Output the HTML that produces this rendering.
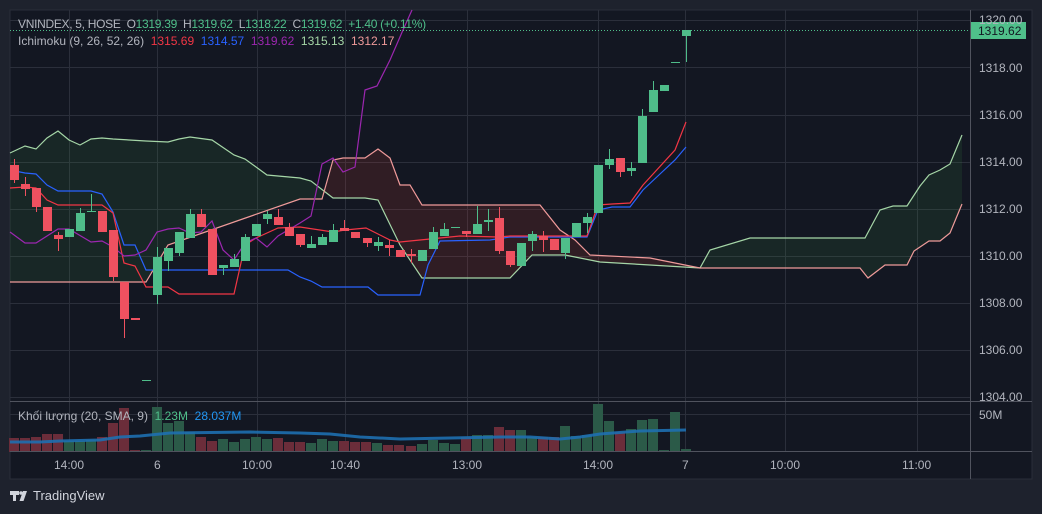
<!DOCTYPE html>
<html><head><meta charset="utf-8"><style>
html,body{margin:0;padding:0;background:#1e222d;width:1042px;height:514px;overflow:hidden;font-family:"Liberation Sans","DejaVu Sans",sans-serif}
#c{position:absolute;left:0;top:0}
.t{position:absolute;font-size:12px;white-space:nowrap}
</style></head><body>
<svg id="c" width="1042" height="514" xmlns="http://www.w3.org/2000/svg">
<rect x="10" y="10" width="1022" height="469" fill="#131722" stroke="#2a2e39"/>
<g stroke="#2b2f3b" stroke-width="1">
<line x1="10" y1="20.5" x2="971" y2="20.5"/><line x1="10" y1="67.5" x2="971" y2="67.5"/><line x1="10" y1="115.5" x2="971" y2="115.5"/><line x1="10" y1="162.5" x2="971" y2="162.5"/><line x1="10" y1="209.5" x2="971" y2="209.5"/><line x1="10" y1="256.5" x2="971" y2="256.5"/><line x1="10" y1="303.5" x2="971" y2="303.5"/><line x1="10" y1="350.5" x2="971" y2="350.5"/><line x1="10" y1="397.5" x2="971" y2="397.5"/><line x1="10" y1="414.5" x2="971" y2="414.5"/>
<line x1="69.5" y1="10" x2="69.5" y2="452"/><line x1="157.5" y1="10" x2="157.5" y2="452"/><line x1="257.5" y1="10" x2="257.5" y2="452"/><line x1="345.5" y1="10" x2="345.5" y2="452"/><line x1="467.5" y1="10" x2="467.5" y2="452"/><line x1="598.5" y1="10" x2="598.5" y2="452"/><line x1="685.5" y1="10" x2="685.5" y2="452"/><line x1="785.5" y1="10" x2="785.5" y2="452"/><line x1="917.5" y1="10" x2="917.5" y2="452"/>
</g>
<g id="cloud"></g>
<g id="vol"></g>
<g id="lines" fill="none" stroke-width="1.2"></g>
<g id="cand"></g>
<line x1="10" y1="30.5" x2="971" y2="30.5" stroke="#4fbf8a" stroke-dasharray="1 2"/>
<line x1="10" y1="401.5" x2="1032" y2="401.5" stroke="#50535e"/>
<line x1="10" y1="451.5" x2="1032" y2="451.5" stroke="#50535e"/>
<line x1="970.5" y1="10" x2="970.5" y2="479" stroke="#50535e"/>
<rect x="971" y="22" width="55" height="17" fill="#4fbf8a"/>
<g fill="#d1d4dc"><path d="M10 491h9v4h-3v6h-3v-6h-3z"/><path d="M23 491h4l-3.5 10h-4z"/><circle cx="21" cy="493" r="1.8"/></g>
</svg>
<div class="t" style="left:18px;top:17px;color:#b2b5be;letter-spacing:-0.3px">VNINDEX, 5, HOSE&nbsp; O<span style="color:#4fbf8a">1319.39</span>&nbsp; H<span style="color:#4fbf8a">1319.62</span>&nbsp; L<span style="color:#4fbf8a">1318.22</span>&nbsp; C<span style="color:#4fbf8a">1319.62</span>&nbsp; <span style="color:#4fbf8a">+1.40 (+0.11%)</span></div>
<div class="t" style="left:18px;top:34px;color:#b2b5be">Ichimoku (9, 26, 52, 26)&nbsp; <span style="color:#f23645">1315.69</span>&nbsp; <span style="color:#2962ff">1314.57</span>&nbsp; <span style="color:#9c27b0">1319.62</span>&nbsp; <span style="color:#a5d6a7">1315.13</span>&nbsp; <span style="color:#ef9a9a">1312.17</span></div>
<div class="t" style="left:18px;top:409px;color:#b2b5be">Khối lượng (20, SMA, 9)&nbsp; <span style="color:#4fbf8a">1.23M</span>&nbsp; <span style="color:#2196f3">28.037M</span></div>
<div class="t" style="left:979px;top:13px;color:#b2b5be">1320.00</div>
<div class="t" style="left:978px;top:24px;color:#131722">1319.62</div>
<div class="t" style="left:979px;top:61px;color:#b2b5be">1318.00</div>
<div class="t" style="left:979px;top:108px;color:#b2b5be">1316.00</div>
<div class="t" style="left:979px;top:155px;color:#b2b5be">1314.00</div>
<div class="t" style="left:979px;top:202px;color:#b2b5be">1312.00</div>
<div class="t" style="left:979px;top:249px;color:#b2b5be">1310.00</div>
<div class="t" style="left:979px;top:296px;color:#b2b5be">1308.00</div>
<div class="t" style="left:979px;top:343px;color:#b2b5be">1306.00</div>
<div class="t" style="left:979px;top:390px;color:#b2b5be">1304.00</div>
<div class="t" style="left:979px;top:408px;color:#b2b5be">50M</div>
<div class="t" style="left:54px;top:458px;color:#b2b5be">14:00</div>
<div class="t" style="left:154px;top:458px;color:#b2b5be">6</div>
<div class="t" style="left:242px;top:458px;color:#b2b5be">10:00</div>
<div class="t" style="left:330px;top:458px;color:#b2b5be">10:40</div>
<div class="t" style="left:452px;top:458px;color:#b2b5be">13:00</div>
<div class="t" style="left:583px;top:458px;color:#b2b5be">14:00</div>
<div class="t" style="left:682px;top:458px;color:#b2b5be">7</div>
<div class="t" style="left:770px;top:458px;color:#b2b5be">10:00</div>
<div class="t" style="left:902px;top:458px;color:#b2b5be">11:00</div>
<div class="t" style="left:33px;top:488px;color:#d1d4dc;font-size:13px">TradingView</div>
<script>
var NS="http://www.w3.org/2000/svg";
function el(p,t,a){var e=document.createElementNS(NS,t);for(var k in a)e.setAttribute(k,a[k]);p.appendChild(e);return e;}
function pts(a){return a.map(function(p){return p.join(",")}).join(" ");}
var A=[[10,153],[25,146],[36,149],[47,138],[58,131],[69,140],[80,145],[91,139],[102,138],[113,139],[146,141],[168,142],[179,139],[190,137],[212,140],[234,155],[245,159],[267,175],[300,178],[311,181],[333,198],[365,198],[378,200],[400,245],[422,278],[510,278],[532,255],[565,255],[600,262],[650,265],[700,268],[710,250],[750,238],[865,238],[880,210],[893,206],[907,206],[920,186],[929,175],[940,170],[950,164],[962,135]];
var B=[[10,282],[146,282],[168,245],[300,199],[322,199],[333,160],[343,158],[365,158],[378,149],[390,158],[400,185],[410,185],[422,205],[540,205],[560,230],[575,240],[590,255],[650,258],[700,268],[860,268],[868,278],[885,265],[907,265],[914,251],[929,241],[940,241],[950,233],[962,204]];
var cl=document.getElementById("cloud");
function interp(L,x){for(var i=0;i<L.length-1;i++){if(x>=L[i][0]&&x<=L[i+1][0]){var t=(x-L[i][0])/(L[i+1][0]-L[i][0]||1);return L[i][1]+t*(L[i+1][1]-L[i][1]);}}return L[L.length-1][1];}
for(var x=10;x<962;x+=1){var a=interp(A,x),b=interp(B,x);el(cl,"rect",{x:x,y:Math.min(a,b),width:1,height:Math.abs(a-b)+0.5,fill:a<b?"rgba(67,160,71,0.12)":"rgba(244,67,54,0.13)"});}
var ln=document.getElementById("lines");
el(ln,"polyline",{points:pts(A),stroke:"#a5d6a7"});
el(ln,"polyline",{points:pts(B),stroke:"#ef9a9a"});
el(ln,"polyline",{points:pts([[10,170],[25,173],[36,174],[47,185],[58,191],[91,191],[102,194],[113,212],[124,245],[135,245],[146,270],[288,270],[300,277],[311,281],[322,287],[368,287],[378,295],[420,295],[428,265],[440,241],[490,240],[510,237],[587,237],[598,210],[612,207],[630,207],[643,190],[660,174],[675,160],[686,147]]),stroke:"#2962ff"});
el(ln,"polyline",{points:pts([[10,188],[25,187],[36,188],[47,200],[58,205],[102,205],[113,213],[124,263],[135,266],[146,287],[168,287],[179,294],[234,294],[245,245],[256,238],[267,233],[278,228],[300,227],[333,232],[345,230],[366,228],[390,240],[400,242],[420,240],[440,238],[460,236],[499,237],[510,236],[587,236],[598,205],[612,204],[630,203],[643,185],[675,150],[686,122]]),stroke:"#f23645"});
el(ln,"polyline",{points:pts([[10,232],[25,243],[36,243],[58,229],[69,229],[91,242],[102,241],[113,247],[124,256],[135,255],[146,250],[157,232],[168,229],[179,228],[190,233],[201,232],[212,221],[223,250],[234,260],[245,243],[256,238],[267,247],[278,236],[300,223],[311,216],[322,164],[333,158],[343,172],[355,167],[365,90],[377,86],[390,60],[403,30],[412,10]]),stroke:"#9c27b0"});
var G="#4fbd8a",R="#ef5160";
var C=[[14,165,180,159,183,R],[25,184,189,177,196,R],[36,188,207,188,212,R],[47,207,231,207,231,R],[58,235,239,232,251,R],[69,229,237,229,237,G],[80,213,231,208,231,G],[91,211,212,194,212,G],[102,211,232,211,232,R],[113,230,277,230,281,R],[124,282,319,282,338,R],[135,318,320,318,320,R],[146,380,381,380,381,G],[157,257,295,247,304,G],[168,248,261,248,271,G],[179,232,253,232,256,G],[190,214,238,209,238,G],[201,214,227,209,227,R],[212,229,275,229,275,R],[223,265,268,265,275,G],[234,259,267,254,267,G],[245,237,261,234,261,G],[256,224,236,224,236,G],[267,214,219,211,224,G],[278,217,225,209,225,R],[289,227,236,223,236,R],[300,234,245,234,247,R],[311,244,248,236,248,G],[322,237,245,234,245,G],[333,230,242,224,242,G],[344,228,231,220,231,R],[355,232,238,232,238,R],[367,238,243,238,247,R],[378,242,246,237,251,G],[389,245,248,240,256,R],[400,250,257,250,257,R],[411,254,256,249,263,R],[422,250,261,250,261,G],[433,232,249,227,249,G],[444,229,236,223,236,G],[455,227,228,227,228,G],[466,231,234,231,237,R],[477,224,234,206,234,G],[488,220,222,209,231,G],[499,218,251,207,254,R],[510,251,265,251,267,R],[521,243,266,243,266,G],[532,234,241,231,251,G],[543,236,240,231,252,R],[554,239,250,239,250,R],[565,238,253,238,259,G],[576,223,237,223,237,G],[587,217,223,213,233,G],[598,165,213,165,213,G],[609,159,165,149,169,G],[620,158,172,158,177,R],[631,168,171,162,176,G],[642,116,163,109,163,G],[653,90,112,81,112,G],[664,85,91,85,91,G],[675,62,63,62,63,G],[686,30,36,30,62,G]];
var cd=document.getElementById("cand");
C.forEach(function(c){el(cd,"line",{x1:c[0]+.5,x2:c[0]+.5,y1:c[3],y2:c[4],stroke:c[5]});el(cd,"rect",{x:c[0]-4,y:c[1],width:9,height:Math.max(1,c[2]-c[1]),fill:c[5]});});
var VG="#2b5a48",VR="#6b2d3a";
var V=[[14,438,VR],[25,438,VR],[36,437,VR],[47,434,VR],[58,434,VR],[69,441,VG],[80,441,VG],[91,440,VG],[102,437,VR],[113,423,VR],[124,408,VR],[135,450,VR],[146,450,VG],[157,407,VG],[168,423,VG],[179,421,VG],[190,432,VG],[201,437,VR],[212,441,VR],[223,439,VG],[234,442,VG],[245,439,VG],[256,437,VG],[267,439,VG],[278,438,VR],[289,442,VR],[300,442,VR],[311,443,VG],[322,439,VG],[333,441,VG],[344,441,VR],[355,442,VR],[366,442,VR],[377,443,VG],[388,445,VR],[399,445,VR],[411,446,VR],[422,444,VG],[433,440,VG],[444,443,VG],[455,444,VG],[466,437,VR],[477,435,VG],[488,435,VG],[499,427,VR],[510,430,VR],[521,430,VG],[532,437,VG],[543,437,VR],[554,437,VR],[565,426,VG],[576,436,VG],[587,435,VG],[598,404,VG],[609,421,VG],[620,432,VR],[631,429,VG],[642,420,VG],[653,419,VG],[664,450,VG],[675,412,VG],[686,449,VG]];
var vg=document.getElementById("vol");
V.forEach(function(v){el(vg,"rect",{x:v[0]-5,y:v[1],width:10,height:452-v[1],fill:v[2]});});
el(vg,"polyline",{points:pts([[10,442],[40,442],[60,441],[100,440],[120,437],[140,436],[170,433],[250,432],[300,433],[330,434],[360,437],[400,439],[450,438],[500,437],[530,437],[560,439],[580,437],[600,434],[640,431],[686,430]]),fill:"none",stroke:"#1e6fb0",opacity:"0.9","stroke-width":"3"});
</script>
</body></html>
